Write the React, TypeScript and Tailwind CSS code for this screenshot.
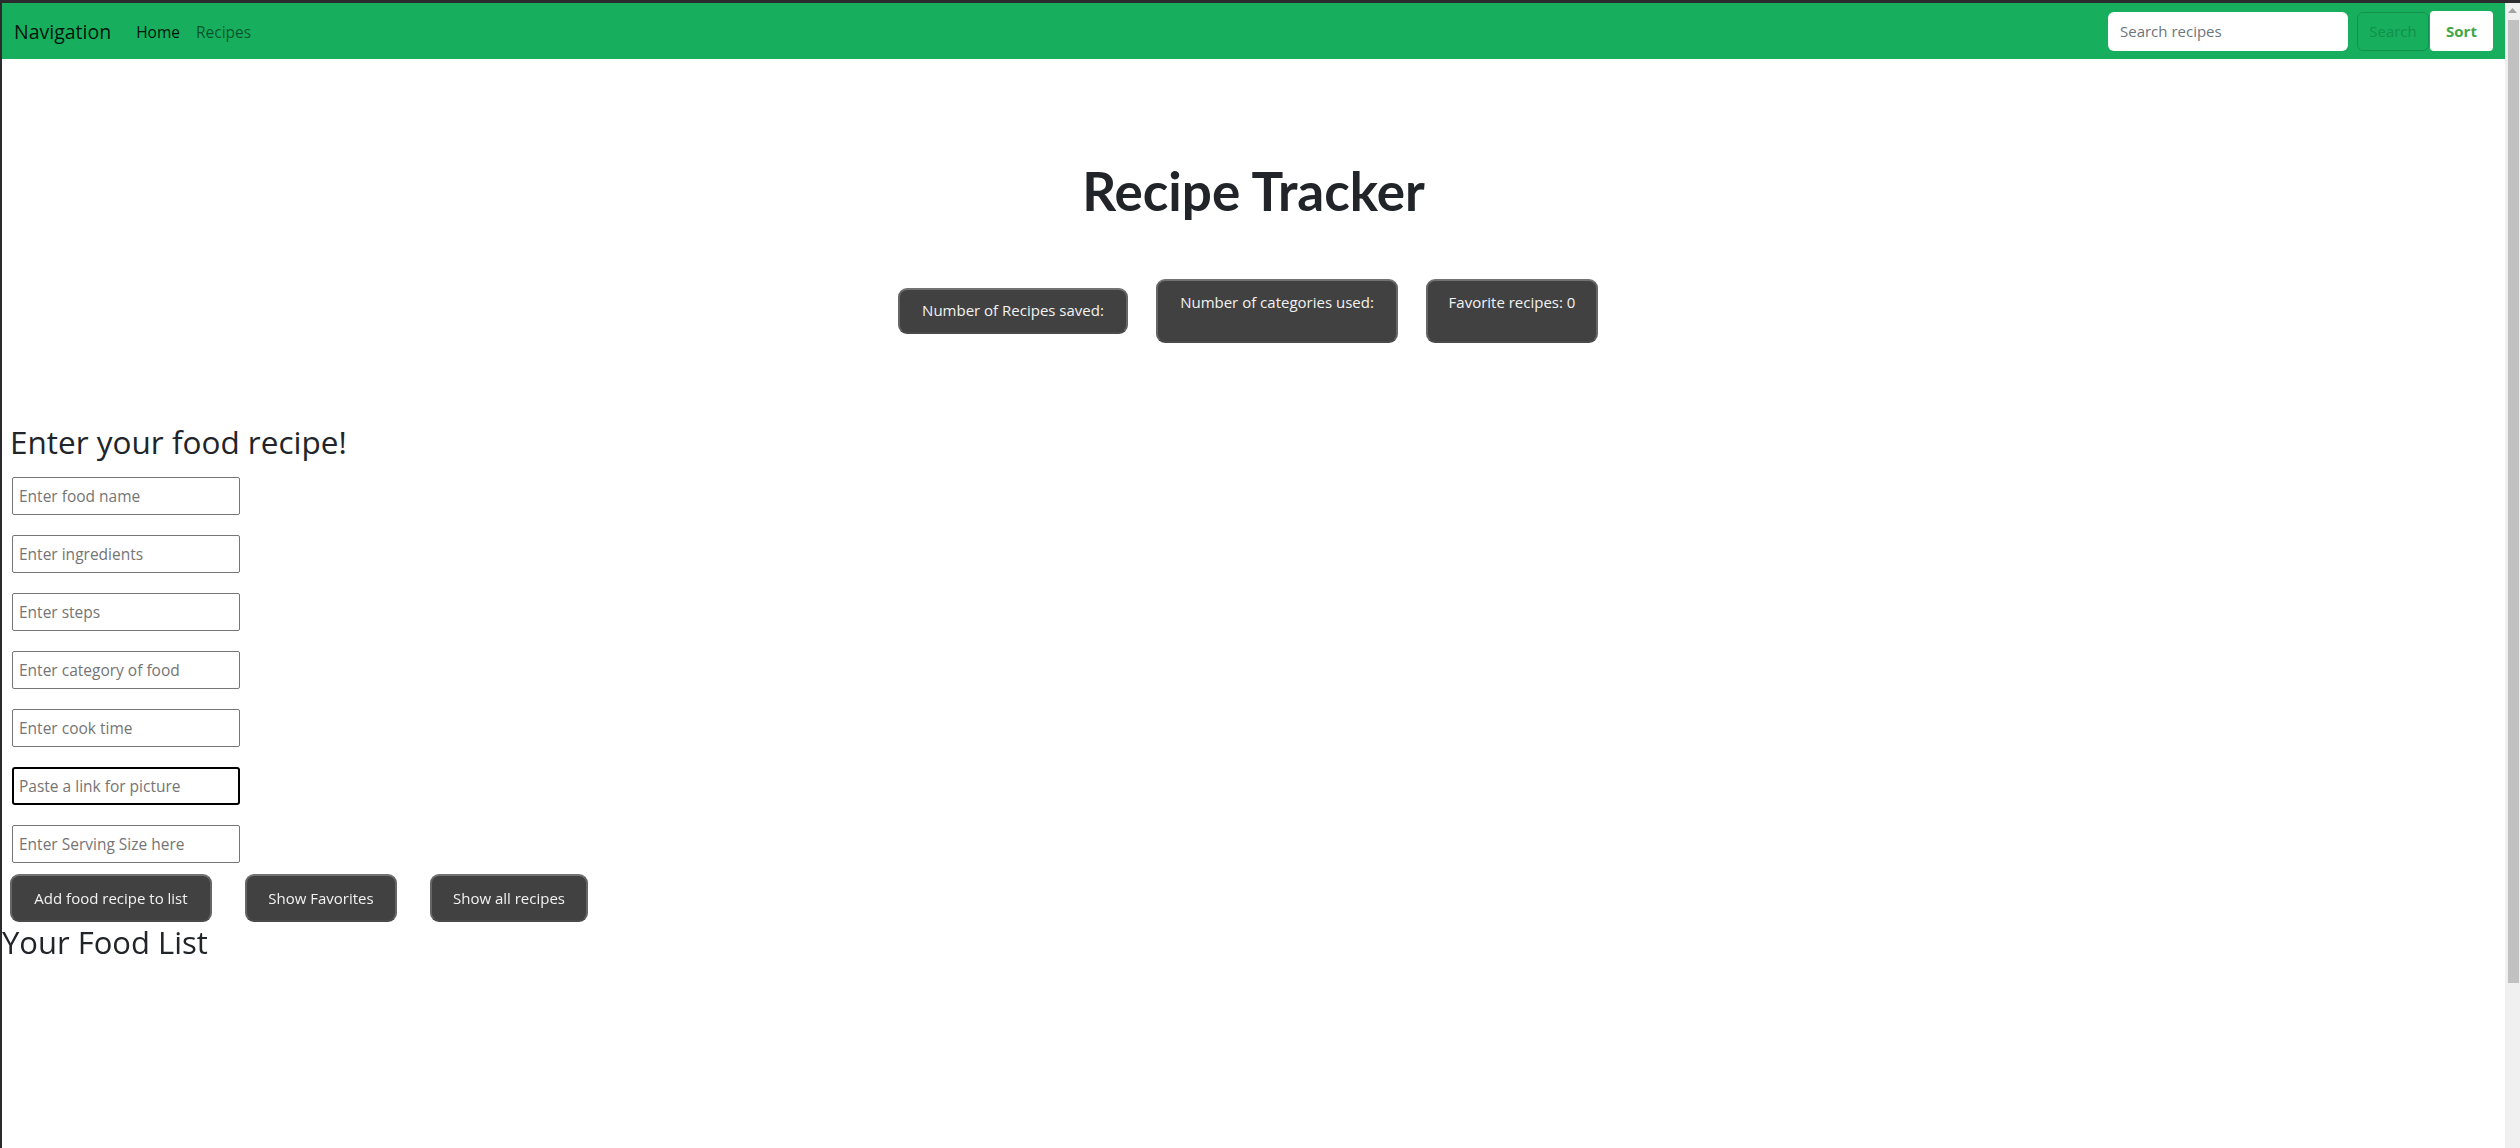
import { useState } from 'react';

const fields = [
  'Enter food name',
  'Enter ingredients',
  'Enter steps',
  'Enter category of food',
  'Enter cook time',
  'Paste a link for picture',
  'Enter Serving Size here',
];

function StatBox({ label, tall, width }: { label: string; tall?: boolean; width: string }) {
  return (
    <div
      className={`${width} ${tall ? 'h-[64px] pt-[9px]' : 'h-[46px] pt-[8px]'} rounded-[9px] border-2 border-t-[#737373] border-x-[#666666] border-b-[#4a4a4a] bg-[#414141] text-center text-[15px] leading-[24px] text-[#f2f2f2]`}
    >
      {label}
    </div>
  );
}

function DarkButton({ label, width }: { label: string; width: string }) {
  return (
    <button
      className={`${width} h-[48px] rounded-[9px] border-2 border-t-[#737373] border-x-[#666666] border-b-[#4a4a4a] bg-[#414141] text-[15px] text-[#f2f2f2]`}
    >
      {label}
    </button>
  );
}

export default function App() {
  const [values, setValues] = useState<string[]>(fields.map(() => ''));

  return (
    <div className="flex h-screen w-full flex-col overflow-hidden bg-[#2b2b2e] pt-[3px] font-['Open_Sans',sans-serif]">
      <div className="flex min-h-0 flex-1">
        {/* page */}
        <div className="ml-[2px] flex-1 bg-white">
          {/* Navbar */}
          <nav className="flex h-[56px] items-center justify-between bg-[#17af5d] pl-[12px] pr-[12px]">
            <div className="flex items-center pt-[2px]">
              <span className="text-[19.5px] text-black/90">Navigation</span>
              <a className="ml-[25px] pt-[2px] text-[15.5px] text-black/90">Home</a>
              <a className="ml-[16px] pt-[2px] text-[15.5px] text-black/55">Recipes</a>
            </div>
            <div className="flex items-center">
              <input
                className="h-[39px] w-[240px] rounded-[6px] bg-white pl-[12px] text-[15px] outline-none placeholder:text-[#6c757d]"
                placeholder="Search recipes"
              />
              <button className="ml-[9px] h-[39px] w-[72px] rounded-[6px] border border-[#13924e] text-[15px] text-[#11904b]">
                Search
              </button>
              <button className="ml-[1px] h-[40px] w-[63px] rounded-[4px] bg-white text-[15px] font-bold text-[#3fa846]">
                Sort
              </button>
            </div>
          </nav>

          {/* Title */}
          <h1 className="mt-[100px] text-center font-['Lato',sans-serif] text-[53px] font-bold leading-[1.2] text-[#212529]">
            Recipe Tracker
          </h1>

          {/* Stats */}
          <div className="mt-[56px] flex items-center justify-center gap-[28px] pr-[11px]">
            <StatBox label="Number of Recipes saved:" width="w-[230px]" />
            <StatBox label="Number of categories used:" width="w-[242px]" tall />
            <StatBox label="Favorite recipes: 0" width="w-[172px]" tall />
          </div>

          {/* Form */}
          <div className="mt-[80px] pl-[8px]">
            <h2 className="text-[31.5px] leading-[1.2] text-[#212529]">Enter your food recipe!</h2>
            <div className="ml-[2px] mt-[17px] flex flex-col gap-[20px]">
              {fields.map((f, i) => (
                <input
                  key={f}
                  autoFocus={i === 5}
                  value={values[i]}
                  onChange={(e) => setValues(values.map((v, j) => (j === i ? e.target.value : v)))}
                  placeholder={f}
                  className={
                    i === 5
                      ? 'h-[38px] w-[228px] rounded-[3px] border-2 border-black pl-[5px] text-[15.5px] text-black outline-none placeholder:text-[#757575]'
                      : 'h-[38px] w-[228px] rounded-[2px] border border-[#767676] pl-[6px] text-[15.5px] text-black outline-none placeholder:text-[#757575]'
                  }
                />
              ))}
            </div>
            <div className="mt-[11px] flex gap-[33px]">
              <DarkButton label="Add food recipe to list" width="w-[202px]" />
              <DarkButton label="Show Favorites" width="w-[152px]" />
              <DarkButton label="Show all recipes" width="w-[158px]" />
            </div>
          </div>

          <h3 className="mt-[2px] text-[31px] leading-[1.2] text-[#212529]">Your Food List</h3>
        </div>

        {/* Scrollbar */}
        <div className="flex w-[15px] flex-col items-center bg-[#f0f0f0]">
          <svg width="9" height="6" viewBox="0 0 9 6" className="mt-[5px]">
            <polygon points="4.5,0 9,5 0,5" fill="#a3a3a3" />
          </svg>
          <div className="ml-[2px] mt-[6px] h-[963px] w-[11px] bg-[#c1c1c1]" />
        </div>
      </div>
    </div>
  );
}
